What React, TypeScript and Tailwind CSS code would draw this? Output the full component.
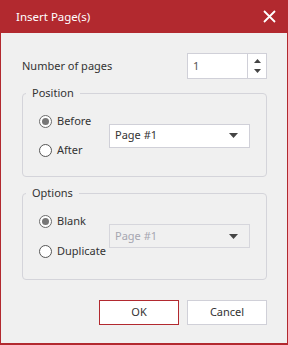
import React from "react";

const font = { fontFamily: '"Noto Sans", "Open Sans", sans-serif' };

const Radio = ({ checked, label }: { checked?: boolean; label: string }) => (
  <label className="flex items-center h-[20px] gap-[5px] text-[11px] text-[#333]">
    <span
      className={
        "w-[13px] h-[13px] rounded-full border flex items-center justify-center bg-white " +
        (checked ? "border-[#6b6b6b]" : "border-[#555]")
      }
    >
      {checked && <span className="w-[7px] h-[7px] rounded-full bg-[#777]" />}
    </span>
    {label}
  </label>
);

const Caret = ({ className = "" }: { className?: string }) => (
  <svg width="9" height="5" viewBox="0 0 9 5" className={className}>
    <path d="M0 0h9L4.5 5z" fill="#444" />
  </svg>
);

const Select = ({ disabled }: { disabled?: boolean }) => (
  <div
    className={
      "w-[141px] h-[24px] border flex items-center justify-between pl-[5px] pr-[11px] text-[11px] " +
      (disabled
        ? "bg-[#f0f0f0] border-[#d6d6dc] text-[#a6a6b0]"
        : "bg-white border-[#d0d0d8] text-[#333]")
    }
  >
    <span>Page #1</span>
    <Caret />
  </div>
);

const Group = ({
  title,
  children,
}: {
  title: string;
  children: React.ReactNode;
}) => (
  <fieldset className="border border-[#d4d4da] rounded-[4px] p-0 m-0">
    <legend className="ml-[3px] px-[6px] h-[16px] leading-[16px] text-[11px] text-[#333]">
      {title}
    </legend>
    {children}
  </fieldset>
);

export default function App() {
  return (
    <div
      className="w-[288px] h-[345px] flex flex-col bg-[#f0f0f0] border-x border-b-2 border-[#b2292f]"
      style={font}
    >
      {/* title bar */}
      <div className="h-[33px] -mx-px bg-[#b2292f] flex items-center justify-between pl-[16px] pr-[12px] shrink-0">
        <span className="text-white text-[11.5px]">Insert Page(s)</span>
        <svg width="13" height="13" viewBox="0 0 13 13">
          <path d="M1 1l11 11M12 1L1 12" stroke="white" strokeWidth="1.8" />
        </svg>
      </div>

      <div className="pl-[21px] pr-[20px] flex flex-col">
        {/* number of pages */}
        <div className="mt-[20px] h-[26px] flex items-center justify-between">
          <span className="text-[11px] text-[#333]">Number of pages</span>
          <div className="w-[80px] h-[26px] border border-[#d0d0d8] bg-white flex">
            <span className="flex-1 flex items-center pl-[5px] text-[11px] text-[#555]">
              1
            </span>
            <div className="w-[19px] border-l border-[#d0d0d8] flex flex-col items-center justify-center gap-[6px]">
              <Caret className="rotate-180 w-[7px] h-[4px]" />
              <Caret className="w-[7px] h-[4px]" />
            </div>
          </div>
        </div>

        {/* position */}
        <div className="mt-[6px]">
          <Group title="Position">
            <div className="flex items-center pl-[16px] pt-[10px] pb-[16px]">
              <div className="w-[70px] flex flex-col gap-[9px]">
                <Radio checked label="Before" />
                <Radio label="After" />
              </div>
              <Select />
            </div>
          </Group>
        </div>

        {/* options */}
        <div className="mt-[8px]">
          <Group title="Options">
            <div className="flex items-center pl-[16px] pt-[10px] pb-[18px]">
              <div className="w-[70px] flex flex-col gap-[10px]">
                <Radio checked label="Blank" />
                <Radio label="Duplicate" />
              </div>
              <Select disabled />
            </div>
          </Group>
        </div>

        {/* buttons */}
        <div className="mt-[20px] flex justify-end gap-[8px]">
          <button className="w-[80px] h-[25px] border border-[#b2292f] bg-white text-[11px] text-[#333]">
            OK
          </button>
          <button className="w-[80px] h-[25px] border border-[#d0d0d8] bg-white text-[11px] text-[#333]">
            Cancel
          </button>
        </div>
      </div>
    </div>
  );
}
